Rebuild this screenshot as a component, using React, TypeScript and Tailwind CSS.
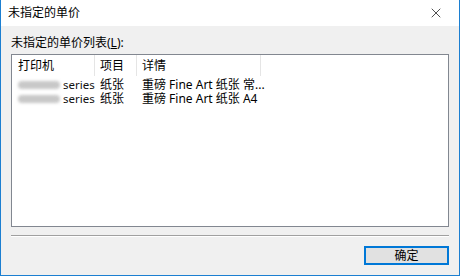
import { X } from "lucide-react";

const rows = [
  { item: "纸张", detail: "重磅 Fine Art 纸张 常..." },
  { item: "纸张", detail: "重磅 Fine Art 纸张 A4" },
];

const font = "font-['Segoe_UI','Noto_Sans','Noto_Sans_CJK_SC',sans-serif]";

export default function App() {
  return (
    <div
      className={`flex h-[276px] w-[460px] flex-col border border-t-0 border-[#1c7fd1] bg-[#f0f0f0] text-[12px] text-black ${font}`}
    >
      {/* title bar */}
      <div className="flex h-[26px] items-center justify-between bg-white pl-[7px] pr-[15px]">
        <span className="leading-none">未指定的单价</span>
        <X size={16} strokeWidth={1.2} className="text-[#222]" />
      </div>

      <div className="flex flex-1 flex-col px-[10px] pt-[9px]">
        <div className="leading-[16px]">
          未指定的单价列表(<span className="underline">L</span>):
        </div>

        {/* list view */}
        <div className="mt-[3px] h-[173px] border border-[#828790] bg-white">
          <div className="flex h-[21px] items-center">
            <div className="flex h-full w-[83px] items-center border-r border-[#e5e5e5] pl-[6px]">打印机</div>
            <div className="flex h-full w-[42px] items-center border-r border-[#e5e5e5] pl-[5px]">项目</div>
            <div className="flex h-full w-[124px] items-center border-r border-[#e5e5e5] pl-[5px]">详情</div>
          </div>
          <div className="mt-[2px] flex flex-col">
            {rows.map((r, i) => (
              <div key={i} className="flex h-[14px] items-center leading-[14px]">
                <div className="flex w-[83px] items-center pl-[6px]">
                  <div className="h-[8px] w-[42px] shrink-0 rounded-sm bg-[#c8c8c8] blur-[1.5px]" />
                  <span className="ml-[3px] text-[11.5px] text-[#111]">series</span>
                </div>
                <div className="w-[42px] pl-[5px]">{r.item}</div>
                <div className="pl-[5px] whitespace-nowrap">{r.detail}</div>
              </div>
            ))}
          </div>
        </div>

        {/* etched separator */}
        <div className="mt-[8px] h-[2px] border-t border-b border-t-[#a0a0a0] border-b-white" />

        <div className="mt-[9px] flex justify-end">
          <button className="flex h-[19px] w-[85px] items-center justify-center border border-[#0078d7] bg-[#e1e1e1] text-[12px] shadow-[inset_0_0_0_1px_#0078d7]">
            确定
          </button>
        </div>
      </div>
    </div>
  );
}
